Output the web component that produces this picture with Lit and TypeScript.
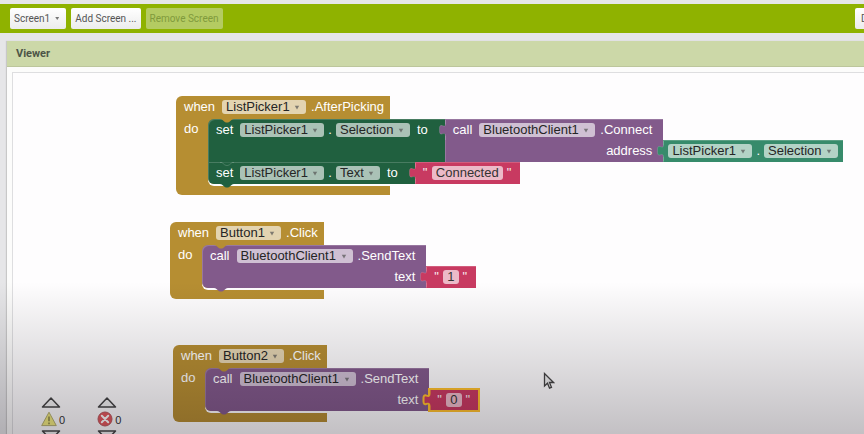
import { LitElement, html, css, svg, nothing, TemplateResult } from "lit";
import { customElement } from "lit/decorators.js";

const dropdown = (label: string, value: string) => html`
  <span class="chip">
    <select aria-label=${label}><option>${value}</option></select>
    <svg class="arrow" viewBox="0 0 6 5" aria-hidden="true"><path d="M0.8 0.8h4.4L3 4.4z" /></svg>
  </span>
`;

const property = (component: string, name: string) => html`
  <span class="prop">${dropdown("Component", component)}<span>.</span>${dropdown("Property", name)}</span>
`;

const notch = (where: string) => html`
  <svg class="notch ${where}" viewBox="0 0 14 5" aria-hidden="true">
    <path d="M0 0h14q-1.500 0-2.500 1l-2.300 2q-2.200 1.200-4.400 0L2.500 1Q1.500 0 0 0z" />
  </svg>
`;

const plug = html`
  <svg class="plug" viewBox="0 0 10 22" aria-hidden="true">
    ${svg`<path d="M10 5H7.500C7.500 8 5.500 7 4 6.500S1.500 7 1.500 9v3.500c0 2 1 3 2.500 2.500s3.500-1 3.500 2H10z" />
    <path class="rim" d="M7.500 1V5C7.500 8 5.500 7 4 6.500S1.500 7 1.500 9v3.500c0 2 1 3 2.500 2.500s3.500-1 3.500 2V21" />`}
  </svg>
`;

const textValue = (value: string, selected = false) => html`
  <div class="value text ${selected ? "selected" : ""}">
    ${plug}<span class="quote">"</span><input aria-label="Text value" .value=${value} size="1" /><span class="quote">"</span>
  </div>
`;

const call = (method: string, argument: string, value: TemplateResult, nested: boolean) => html`
  <div class="line">
    <div class="call ${nested ? "statement" : "output"}">
      ${nested ? html`${notch("top")}${notch("bottom")}` : plug}
      <div class="row first">
        <span>call</span>${dropdown("Component", "BluetoothClient1")}<span class="method">.${method}</span>
      </div>
      <div class="row arg"><span>${argument}</span></div>
    </div>
    ${value}
  </div>
`;

const setter = (name: string, value: TemplateResult, tall: boolean) => html`
  <div class="line ${tall ? "top" : ""}">
    <div class="setter statement ${tall ? "tall" : ""}">
      ${notch(tall ? "top" : "top joined")}${tall ? nothing : notch("bottom")}
      <div class="row first"><span>set</span>${property("ListPicker1", name)}<span>to</span></div>
    </div>
    ${value}
  </div>
`;

const eventBlock = (place: string, component: string, name: string, body: TemplateResult) => html`
  <section class="event ${place}">
    <div class="frame head">
      <span>when</span>${dropdown("Component", component)}<span class="method">.${name}</span>
    </div>
    <div class="mid">
      <div class="do">do</div>
      <div class="stack">${body}</div>
    </div>
    <div class="frame foot"></div>
  </section>
`;

const triangle = (down: boolean) => html`
  <svg class="tri" viewBox="0 0 20 11" aria-hidden="true">
    <path d=${down ? "M1.500 1h17L10 10z" : "M1.500 10h17L10 1z"} />
  </svg>
`;

const counter = (kind: string, icon: TemplateResult) => html`
  <div class="counter">
    <button aria-label="Previous ${kind}">${triangle(false)}</button>
    <div class="count">${icon}<span>0</span></div>
    <button aria-label="Next ${kind}">${triangle(true)}</button>
  </div>
`;

const warningIcon = html`
  <svg class="sign" viewBox="0 0 16 16" aria-hidden="true">
    <path d="M8 1.200L15.300 14.600H0.700z" fill="#f2ec80" stroke="#b5b070" stroke-linejoin="round" />
    <path d="M8 5.500v4.700M8 11.600v1.600" stroke="#8a8748" stroke-width="1.500" />
  </svg>
`;

const errorIcon = html`
  <svg class="sign" viewBox="0 0 16 16" aria-hidden="true">
    <circle cx="8" cy="8" r="7" fill="#e4585d" stroke="#b8585c" />
    <path d="M4.800 4.800l6.400 6.400M11.200 4.800l-6.400 6.400" stroke="#fff" stroke-width="2" stroke-linecap="round" />
  </svg>
`;

@customElement("app-root")
export class AppRoot extends LitElement {
  static styles = css`
    :host {
      display: flex;
      flex-direction: column;
      position: relative;
      box-sizing: border-box;
      height: 100vh;
      padding-top: 4px;
      overflow: hidden;
      background: #e6e6e8;
      font-family: Roboto, "Liberation Sans", sans-serif;
    }
    * { box-sizing: border-box; }
    button, select, input { font: inherit; color: inherit; margin: 0; }

    .toolbar {
      display: flex;
      flex: none;
      align-items: center;
      gap: 5px;
      height: 29px;
      padding-left: 10px;
      background: #8fb200;
      font-size: 10px;
      color: #555;
    }
    .toolbar button {
      height: 21px;
      padding: 0 4px;
      border: 0;
      border-radius: 2px;
      background: linear-gradient(#fff, #ececec);
      white-space: nowrap;
    }
    .toolbar button:disabled { background: #b4cb62; color: #809a3c; }
    .toolbar .caret { display: inline-block; width: 4px; height: 3px; margin: 0 3px 2px 5px; background: #777; clip-path: polygon(0 0, 100% 0, 50% 100%); }
    .edge { width: 9px; margin-left: auto; }
    .toolbar .edge button { padding: 0 6px; }

    .viewer {
      display: flex;
      flex: 1;
      flex-direction: column;
      min-height: 0;
      margin: 8px 0 0 7px;
      background: #fcfcfb;
      box-shadow: -1px 0 1px #c8c8c8;
    }
    h1 {
      flex: none;
      height: 26px;
      margin: 0;
      padding-left: 9px;
      border-bottom: 1px solid #bcc69c;
      background: #ccd8a8;
      color: #4c5547;
      font-size: 11px;
      font-weight: 700;
      line-height: 26px;
    }
    .canvas {
      position: relative;
      flex: 1;
      margin: 5px 0 0 5px;
      border: solid #dedee0;
      border-width: 1px 0 0 1px;
      background: #fefdfe;
      overflow: hidden;
      font: 13px/14px "Liberation Sans", Arial, sans-serif;
      color: #fff;
    }

    .event { display: grid; grid-template-columns: max-content; position: absolute; --event: #b68e32; }
    .picker { left: 163px; top: 23px; }
    .click1 { left: 157px; top: 149px; }
    .click2 { left: 160px; top: 272px; }
    .frame { background: var(--event); }
    .head, .row { display: flex; align-items: center; gap: 7px; white-space: nowrap; }
    .head { height: 23px; padding: 0 6px 1px 8px; border-radius: 6px 0 0 0; }
    .foot { height: 9px; border-radius: 0 0 0 6px; }
    .method { margin-left: -2px; }
    .mid { display: flex; width: 0; padding-bottom: 2px; }
    .do { flex: none; width: 40px; margin: 0 -8px -2px 0; padding: 3px 8px; background: var(--event); }
    .stack { position: relative; border-radius: 6px 0 0 6px; box-shadow: 0 2px 0 #fefdfe; }

    .line { display: flex; align-items: flex-end; width: max-content; }
    .line.top { align-items: flex-start; }
    .statement, .value, .output { position: relative; box-shadow: inset 1px 1px 0 rgb(255 255 255 / 18%); }
    .setter { height: 22px; padding: 0 17px 0 8px; border-radius: 0 0 0 6px; background: #20603f; }
    .setter.tall { height: 43px; border-radius: 6px 0 0 0; }
    .call { height: 43px; padding: 0 11px 0 8px; background: #825a8b; }
    .call.statement { border-radius: 6px 0 0 6px; }
    .row { height: 21px; }
    .arg { height: 22px; justify-content: flex-end; }
    .value { display: flex; align-items: center; height: 22px; }
    .getter { padding: 0 5px; background: #378b6b; }
    .text { gap: 4px; padding: 0 8px; background: #c83a61; }
    .quote { width: 5px; opacity: 0.9; }

    .prop { display: flex; align-items: center; gap: 4px; }
    .chip { display: flex; position: relative; height: 14px; border-radius: 3px; background: rgb(255 255 255 / 62%); color: #252525; }
    select {
      appearance: none;
      height: 14px;
      padding: 0 16px 0 4px;
      border: 0;
      background: none;
      line-height: 14px;
    }
    .arrow { position: absolute; right: 6px; top: 5px; width: 6px; height: 5px; fill: #555; opacity: 0.7; pointer-events: none; }
    input {
      field-sizing: content;
      height: 14px;
      margin-bottom: 1px;
      padding: 0 4px;
      border: 0;
      border-radius: 3px;
      background: rgb(255 255 255 / 65%);
      color: #333;
      line-height: 14px;
    }

    .notch { position: absolute; left: 12px; width: 14px; height: 5px; fill: var(--event); }
    .notch.top { top: 0; }
    .notch.joined { fill: #20603f; stroke: rgb(255 255 255 / 18%); }
    .notch.bottom { top: 100%; fill: #825a8b; }
    .setter .notch.bottom { fill: #20603f; }
    .plug { position: absolute; left: -7px; top: 0; width: 10px; height: 22px; fill: #825a8b; }
    .getter .plug { fill: #378b6b; }
    .text .plug { fill: #c83a61; }
    .plug .rim { fill: none; stroke: rgb(255 255 255 / 14%); }
    .selected { box-shadow: 0 0 0 1px #ffc02c, inset 0 0 0 1px #ffc02c; }
    .plug .rim { stroke-linejoin: round; }
    .selected .plug .rim { stroke: #ffc02c; stroke-width: 2; }

    .counters { display: flex; position: absolute; left: 28px; bottom: -7px; gap: 32px; color: #333; font-size: 11px; }
    .counter { display: grid; gap: 3px; justify-items: start; }
    .counter button { height: 11px; padding: 0; border: 0; background: none; }
    .tri { display: block; width: 20px; height: 11px; fill: #f4f4f4; stroke: #444; stroke-width: 1.5; stroke-linejoin: round; }
    .count { display: flex; align-items: center; gap: 2px; height: 16px; }
    .count span { padding-top: 2px; }
    .sign { width: 16px; height: 16px; fill: none; }
    .pointer { position: absolute; left: 530px; top: 299px; width: 12px; height: 18px; fill: #eee; stroke: #444; stroke-width: 1.3; }
    .shade {
      position: absolute;
      inset: auto 0 0;
      height: 35%;
      background: linear-gradient(rgb(8 0 12 / 0%), rgb(8 0 12 / 24%));
      pointer-events: none;
    }
  `;

  render() {
    const selection = html`<div class="value getter">${plug}${property("ListPicker1", "Selection")}</div>`;
    return html`
      <nav class="toolbar">
        <button>Screen1<span class="caret"></span></button>
        <button>Add Screen ...</button>
        <button disabled>Remove Screen</button>
        <div class="edge"><button>Designer</button></div>
      </nav>
      <main class="viewer">
        <h1>Viewer</h1>
        <div class="canvas">
          ${eventBlock("picker", "ListPicker1", "AfterPicking", html`
            ${setter("Selection", call("Connect", "address", selection, false), true)}
            ${setter("Text", textValue("Connected"), false)}
          `)}
          ${eventBlock("click1", "Button1", "Click", call("SendText", "text", textValue("1"), true))}
          ${eventBlock("click2", "Button2", "Click", call("SendText", "text", textValue("0", true), true))}
          <div class="counters">${counter("warning", warningIcon)}${counter("error", errorIcon)}</div>
          <svg class="pointer" viewBox="0 0 12 18" aria-hidden="true">
            <path d="M1.500 1.500v12.500l3-2.800 2 5 2-.9-2-4.800h4z" />
          </svg>
        </div>
      </main>
      <div class="shade"></div>
    `;
  }
}
